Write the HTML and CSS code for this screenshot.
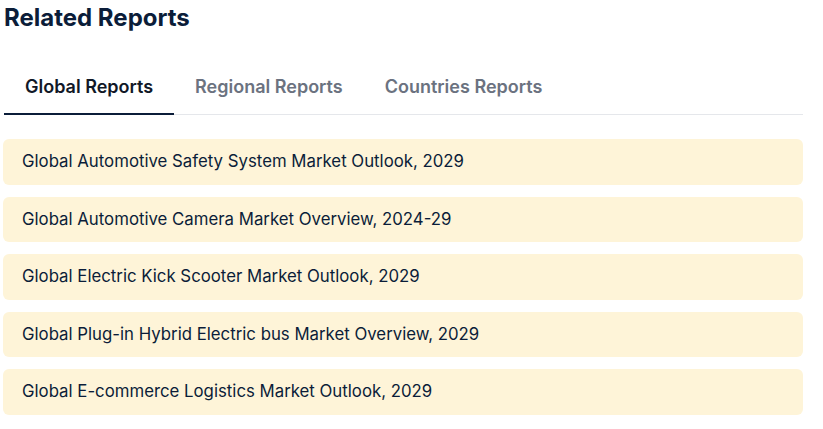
FILE: index.html
```html
<!DOCTYPE html>
<html>
<head>
<meta charset="utf-8">
<link rel="stylesheet" href="styles.css">
</head>
<body>
<div class="wrap">
  <h2 class="title">Related Reports</h2>
  <div class="tabs">
    <div class="tab active">Global Reports</div>
    <div class="tab">Regional Reports</div>
    <div class="tab">Countries Reports</div>
  </div>
  <div class="list">
    <a class="card">Global Automotive Safety System Market Outlook, 2029</a>
    <a class="card">Global Automotive Camera Market Overview, 2024-29</a>
    <a class="card">Global Electric Kick Scooter Market Outlook, 2029</a>
    <a class="card">Global Plug-in Hybrid Electric bus Market Overview, 2029</a>
    <a class="card">Global E-commerce Logistics Market Outlook, 2029</a>
  </div>
</div>
</body>
</html>
```

FILE: styles.css
```css
html, body {
  margin: 0;
  padding: 0;
  background: #fff;
}
body {
  font-family: Inter, "Noto Sans", sans-serif;
}
.wrap {
  width: 800px;
  padding: 0 0 0 3px;
}
.title {
  margin: 0;
  padding: 3px 0 0 1px;
  font-size: 24px;
  line-height: 30px;
  font-weight: 700;
  color: #0b1d39;
}
.tabs {
  display: flex;
  margin-top: 31px;
  margin-left: 1px;
  border-bottom: 1px solid #e5e7eb;
}
.tab {
  padding: 11px 21px 14px;
  font-size: 18px;
  line-height: 24px;
  font-weight: 600;
  color: #6b7280;
  margin-bottom: -1px;
  border-bottom: 2px solid transparent;
}
.tab.active {
  color: #111827;
  border-bottom-color: #0b1d39;
}
.list {
  display: flex;
  flex-direction: column;
  gap: 12px;
  margin-top: 24px;
}
.card {
  display: block;
  background: #fef4d8;
  border-radius: 6px;
  padding: 11px 19px;
  font-size: 16.8px;
  line-height: 23.5px;
  color: #0b1d39;
  text-decoration: none;
}
```
